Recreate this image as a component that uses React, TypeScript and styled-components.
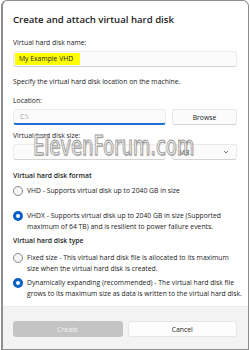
import React, { FC } from "react";
import styled, { createGlobalStyle } from "styled-components";

const GlobalStyle = createGlobalStyle`
  html, body {
    margin: 0;
    padding: 0;
    background: #ffffff;
  }
  body {
    font-family: "Open Sans", "Noto Sans", sans-serif;
    color: #1b1b1b;
  }
`;

const Window = styled.div`
  position: relative;
  box-sizing: border-box;
  width: 248px;
  height: 350px;
  margin-left: 1px;
  border: 1px solid #8e8e8e;
  border-left-width: 2px;
  border-radius: 6px 6px 0 0;
  background: #ffffff;
  display: flex;
  flex-direction: column;
  overflow: hidden;
`;

const Content = styled.div`
  flex: 1;
  min-height: 0;
  overflow: hidden;
  padding: 12px 11px 0 10px;
  display: flex;
  flex-direction: column;
`;

const Title = styled.div`
  font-size: 9.6px;
  font-weight: 600;
  line-height: 14px;
  margin-bottom: 10px;
`;

const Label = styled.div<{ $strong?: boolean; $mb?: number }>`
  font-size: 6.8px;
  font-weight: ${(p) => (p.$strong ? 600 : 400)};
  line-height: 12px;
  margin-bottom: ${(p) => p.$mb ?? 2}px;
`;

const Note = styled.div`
  font-size: 6.8px;
  line-height: 12px;
  margin: 9px 0 7px;
`;

const Row = styled.div<{ $mb?: number }>`
  display: flex;
  gap: 6px;
  margin-bottom: ${(p) => p.$mb ?? 0}px;
`;

const Field = styled.div<{ $focused?: boolean }>`
  box-sizing: border-box;
  height: 16px;
  flex: 1;
  border: 1px solid #ececec;
  border-bottom: ${(p) => (p.$focused ? "2px solid #1f6fd0" : "1px solid #d2d2d2")};
  border-radius: 3px;
  background: #fbfbfb;
  display: flex;
  align-items: center;
  padding: 0 1px;
  font-size: 6.8px;
`;

const Highlight = styled.span`
  background: #ffff00;
  padding: 0 7px 0 4px;
  line-height: 12px;
  color: #222;
`;

const Placeholder = styled.span`
  color: #9a9a9a;
  padding-left: 5px;
`;

const SmallButton = styled.div`
  box-sizing: border-box;
  width: 65px;
  height: 16px;
  border: 1px solid #e8e8e8;
  border-bottom-color: #d4d4d4;
  border-radius: 3px;
  background: #fbfbfb;
  display: flex;
  align-items: center;
  justify-content: center;
  font-size: 6.8px;
`;

const Select = styled(SmallButton)`
  justify-content: space-between;
  padding: 0 7px 0 6px;
`;

const RadioRow = styled.div<{ $mb?: number }>`
  display: flex;
  gap: 4px;
  align-items: flex-start;
  margin-bottom: ${(p) => p.$mb ?? 2}px;
`;

const Radio = styled.span<{ $checked?: boolean }>`
  box-sizing: border-box;
  flex: none;
  width: 10px;
  height: 10px;
  margin-top: 1px;
  border-radius: 50%;
  border: ${(p) => (p.$checked ? "3px solid #0a5fc4" : "1px solid #8a8a8a")};
  background: ${(p) => (p.$checked ? "#ffffff" : "#f6f6f6")};
`;

const RadioText = styled.div`
  font-size: 6.8px;
  line-height: 11.5px;
  white-space: nowrap;
`;

const Footer = styled.div`
  height: 43px;
  flex: none;
  box-sizing: border-box;
  background: #f3f3f3;
  border-top: 1px solid #ebebeb;
  display: flex;
  align-items: flex-start;
  gap: 5px;
  padding: 14px 11px 0 10px;
`;

const FooterButton = styled.div<{ $disabled?: boolean }>`
  flex: 1;
  height: 16px;
  box-sizing: border-box;
  border-radius: 3px;
  display: flex;
  align-items: center;
  justify-content: center;
  font-size: 6.8px;
  background: ${(p) => (p.$disabled ? "#c4c4c4" : "#fdfdfd")};
  color: ${(p) => (p.$disabled ? "#f2f2f2" : "#1b1b1b")};
  border: 1px solid ${(p) => (p.$disabled ? "#c4c4c4" : "#e6e6e6")};
`;

const Watermark = styled.div`
  position: absolute;
  left: 30px;
  top: 130px;
  font-family: "DejaVu Sans", sans-serif;
  font-size: 26px;
  line-height: 30px;
  transform: scaleX(0.69);
  transform-origin: left top;
  color: #ffffff;
  -webkit-text-stroke: 1px #959595;
  text-shadow: 1px 1px 1px rgba(0, 0, 0, 0.25);
  pointer-events: none;
  white-space: nowrap;
`;

const Chevron: FC = () => (
  <svg width="6" height="4" viewBox="0 0 6 4">
    <path d="M1 1 L3 3 L5 1" fill="none" stroke="#555" strokeWidth="0.8" />
  </svg>
);

const App: FC = () => {
  return (
    <>
      <GlobalStyle />
      <Window>
        <Content>
          <Title>Create and attach virtual hard disk</Title>
          <Label>Virtual hard disk name:</Label>
          <Row>
            <Field>
              <Highlight>My Example VHD</Highlight>
            </Field>
          </Row>
          <Note>Specify the virtual hard disk location on the machine.</Note>
          <Label>Location:</Label>
          <Row $mb={5}>
            <Field $focused>
              <Placeholder>C:\</Placeholder>
            </Field>
            <SmallButton>Browse</SmallButton>
          </Row>
          <Label>Virtual hard disk size:</Label>
          <Row $mb={10}>
            <Field />
            <Select>
              <span>MB</span>
              <Chevron />
            </Select>
          </Row>
          <Label $strong $mb={3}>
            Virtual hard disk format
          </Label>
          <RadioRow $mb={13}>
            <Radio />
            <RadioText>VHD - Supports virtual disk up to 2040 GB in size</RadioText>
          </RadioRow>
          <RadioRow>
            <Radio $checked />
            <RadioText>
              VHDX - Supports virtual disk up to 2040 GB in size (Supported
              <br />
              maximum of 64 TB) and is resilient to power failure events.
            </RadioText>
          </RadioRow>
          <Label $strong $mb={5}>
            Virtual hard disk type
          </Label>
          <RadioRow>
            <Radio />
            <RadioText>
              Fixed size - This virtual hard disk file is allocated to its maximum
              <br />
              size when the virtual hard disk is created.
            </RadioText>
          </RadioRow>
          <RadioRow>
            <Radio $checked />
            <RadioText>
              Dynamically expanding (recommended) - The virtual hard disk file
              <br />
              grows to its maximum size as data is written to the virtual hard disk.
            </RadioText>
          </RadioRow>
        </Content>
        <Footer>
          <FooterButton $disabled>Create</FooterButton>
          <FooterButton>Cancel</FooterButton>
        </Footer>
        <Watermark>ElevenForum.com</Watermark>
      </Window>
    </>
  );
};

export default App;
